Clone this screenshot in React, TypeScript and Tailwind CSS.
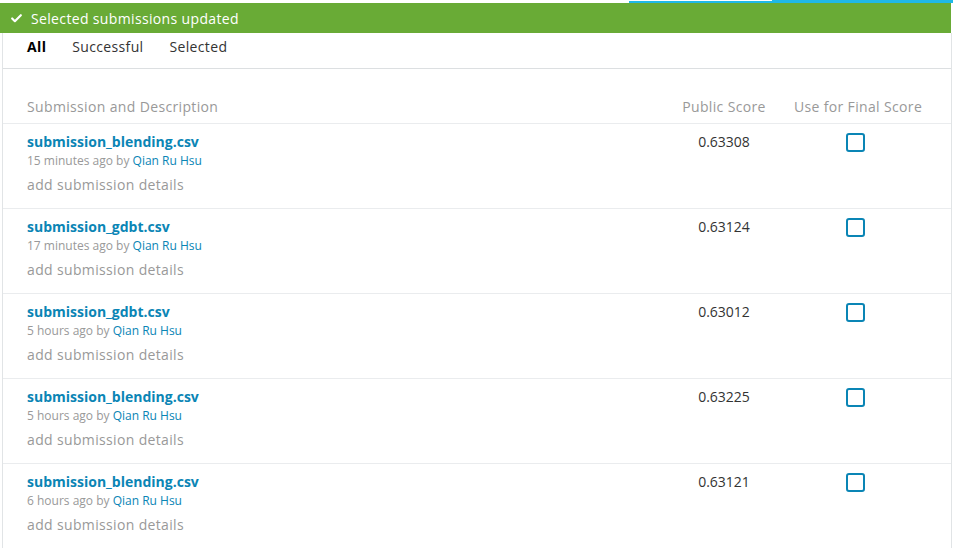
import { Check } from "lucide-react";

const rows = [
  { file: "submission_blending.csv", when: "15 minutes ago", score: "0.63308" },
  { file: "submission_gdbt.csv", when: "17 minutes ago", score: "0.63124" },
  { file: "submission_gdbt.csv", when: "5 hours ago", score: "0.63012" },
  { file: "submission_blending.csv", when: "5 hours ago", score: "0.63225" },
  { file: "submission_blending.csv", when: "6 hours ago", score: "0.63121" },
];

const App = () => {
  return (
    <div className="w-[953px] h-[548px] overflow-hidden bg-white font-['Open_Sans',sans-serif]">
      {/* top strip */}
      <div className="flex h-[3px]">
        <div className="w-[629px]" />
        <div className="w-[143px] pt-[1px]">
          <div className="h-[2px] bg-[#1fb8e8]" />
        </div>
        <div className="flex-1 h-[3px] bg-[#1fb8e8]" />
      </div>

      {/* notice */}
      <div className="w-[951px] h-[30px] bg-[#69ab36] flex items-center pl-[10px] gap-[8px] text-white text-[14px] tracking-[0.35px]">
        <Check size={13} strokeWidth={4} />
        <span>Selected submissions updated</span>
      </div>

      <div className="ml-[2px] w-[950px] h-[515px] border-x border-[#e1e4e6]">
        {/* tabs */}
        <div className="h-[36px] flex items-center gap-[26px] pl-[24px] border-b border-[#dcdfe1] text-[14px] text-[#333] pb-[9px] tracking-[0.35px]">
          <span className="font-bold text-black">All</span>
          <span>Successful</span>
          <span>Selected</span>
        </div>

        {/* header */}
        <div className="grid grid-cols-[1fr_112px_156px] pl-[24px] pr-[15px] h-[55px] items-end pb-[6px] border-b border-[#eaecee] text-[14px] text-[#999] tracking-[0.35px]">
          <div>Submission and Description</div>
          <div className="text-center">Public Score</div>
          <div className="text-center">Use for Final Score</div>
        </div>

        {rows.map((r, i) => (
          <div
            key={i}
            className="grid grid-cols-[1fr_112px_156px] pl-[24px] pr-[15px] h-[85px] border-b border-[#eaecee]"
          >
            <div className="pt-[8px] flex flex-col">
              <span className="text-[14px] font-bold text-[#0a85b5] leading-[20px]">{r.file}</span>
              <span className="text-[12px] text-[#999] leading-[16px] mt-[1px]">
                {r.when} by <span className="text-[#0a85b5]">Qian Ru Hsu</span>
              </span>
              <span className="text-[14px] text-[#999] leading-[20px] mt-[6px] tracking-[0.35px]">add submission details</span>
            </div>
            <div className="pt-[8px] text-center text-[14px] text-[#333] leading-[20px]">{r.score}</div>
            <div className="pt-[9px] pr-[5px] flex justify-center">
              <div className="w-[19px] h-[19px] border-2 border-[#0a85b5] rounded-[3px]" />
            </div>
          </div>
        ))}
      </div>
    </div>
  );
};

export default App;
